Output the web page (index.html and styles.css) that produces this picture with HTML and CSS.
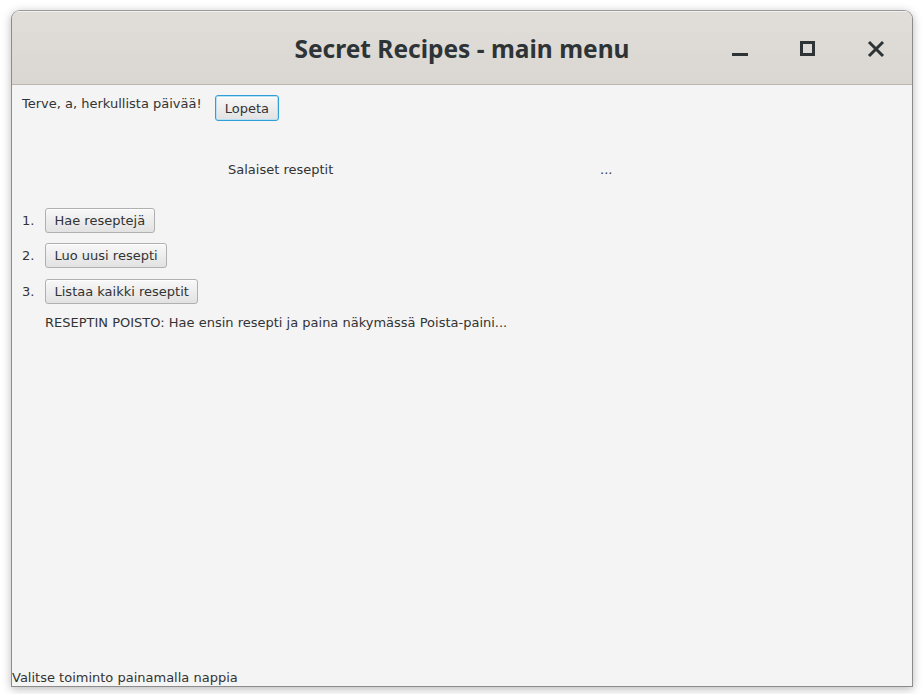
FILE: index.html
```html
<!DOCTYPE html>
<html>
<head>
<meta charset="utf-8">
<link rel="stylesheet" href="styles.css">
</head>
<body>
<div class="window">
  <div class="titlebar">
    <div class="title">Secret Recipes - main menu</div>
    <div class="controls">
      <span class="ctl ctl-min"><svg width="18" height="18" viewBox="0 0 18 18"><rect x="1" y="13" width="16" height="3" fill="#2e3436"/></svg></span>
      <span class="ctl ctl-max"><svg width="18" height="18" viewBox="0 0 18 18"><rect x="2.5" y="2.5" width="12" height="12" fill="none" stroke="#2e3436" stroke-width="3"/></svg></span>
      <span class="ctl ctl-close"><svg width="18" height="18" viewBox="0 0 18 18"><path d="M2 2 L16 16 M16 2 L2 16" stroke="#2e3436" stroke-width="3"/></svg></span>
    </div>
  </div>
  <div class="content">
    <div class="row-top">
      <span class="label">Terve, a, herkullista päivää!</span>
      <button class="btn btn-focus">Lopeta</button>
    </div>
    <div class="row-heading">
      <span class="label heading">Salaiset reseptit</span>
      <span class="label dots">...</span>
    </div>
    <div class="menu">
      <div class="menu-row"><span class="num">1.</span><button class="btn">Hae reseptejä</button></div>
      <div class="menu-row"><span class="num">2.</span><button class="btn">Luo uusi resepti</button></div>
      <div class="menu-row"><span class="num">3.</span><button class="btn">Listaa kaikki reseptit</button></div>
      <div class="note">RESEPTIN POISTO: Hae ensin resepti ja paina näkymässä Poista-paini...</div>
    </div>
    <div class="spacer"></div>
    <div class="status">Valitse toiminto painamalla nappia</div>
  </div>
</div>
</body>
</html>
```
FILE: styles.css
```css
html, body {
  margin: 0;
  padding: 0;
  background: #ffffff;
}
body {
  width: 924px;
  height: 694px;
  overflow: hidden;
}
.window {
  margin: 10px 0 0 11px;
  width: 900px;
  height: 675px;
  border: 1px solid #8c8c8c;
  border-top-color: #9a9a9a;
  border-radius: 9px 9px 0 0;
  box-shadow: 0 2px 10px rgba(0,0,0,0.28);
  background: #f4f4f4;
  display: flex;
  flex-direction: column;
  overflow: hidden;
  font-family: "DejaVu Sans", sans-serif;
  font-size: 13px;
  color: #333333;
}
.titlebar {
  height: 73px;
  flex: none;
  background: linear-gradient(#e1ddd9, #dad6d2);
  border-bottom: 1px solid #bcb5ae;
  box-shadow: inset 0 1px 0 #f2f0ee;
  display: flex;
  align-items: center;
  justify-content: center;
  position: relative;
}
.title {
  font-family: "Noto Sans", sans-serif;
  font-weight: bold;
  font-size: 24.5px;
  color: #2e3436;
  margin-top: 1px;
  margin-left: 0;
}
.controls {
  position: absolute;
  right: 27px;
  top: 29px;
  display: flex;
  gap: 50px;
}
.ctl {
  width: 18px;
  height: 18px;
  display: block;
}
.ctl svg { display: block; }
.content {
  flex: 1;
  display: flex;
  flex-direction: column;
}
.row-top {
  display: flex;
  align-items: flex-start;
  padding: 10px 0 0 10px;
  gap: 13px;
}
.label {
  line-height: 17px;
  white-space: nowrap;
}
.btn {
  font-family: "DejaVu Sans", sans-serif;
  font-size: 13px;
  color: #333333;
  height: 25px;
  padding: 0 8.5px;
  border: 1px solid #b0b0b0;
  border-radius: 3px;
  background: linear-gradient(#f8f8f8, #e2e2e2);
  box-shadow: inset 0 1px 0 #ffffff;
  margin: 0;
  line-height: 23px;
}
.btn-focus {
  height: 26px;
  padding: 0 9px;
  border: 1px solid #2f9fd8;
  box-shadow: inset 0 0 0 1px #b9dff2, inset 0 2px 0 #ffffff;
  margin-top: 0;
}
.row-heading {
  display: flex;
  padding: 40px 0 0 216px;
  height: 17px;
}
.heading { width: 372px; }
.menu {
  display: flex;
  flex-direction: column;
  padding: 30px 0 0 10px;
  gap: 10px;
}
.menu-row {
  display: flex;
  align-items: center;
  gap: 10px;
}
.menu-row:nth-child(3) { margin-top: 1px; }
.num {
  width: 13px;
  line-height: 17px;
}
.note {
  padding-left: 23px;
  margin-top: 0;
  line-height: 17px;
}
.spacer { flex: 1; }
.status {
  line-height: 17px;
  height: 17px;
  margin-top: -1px;
}
```
